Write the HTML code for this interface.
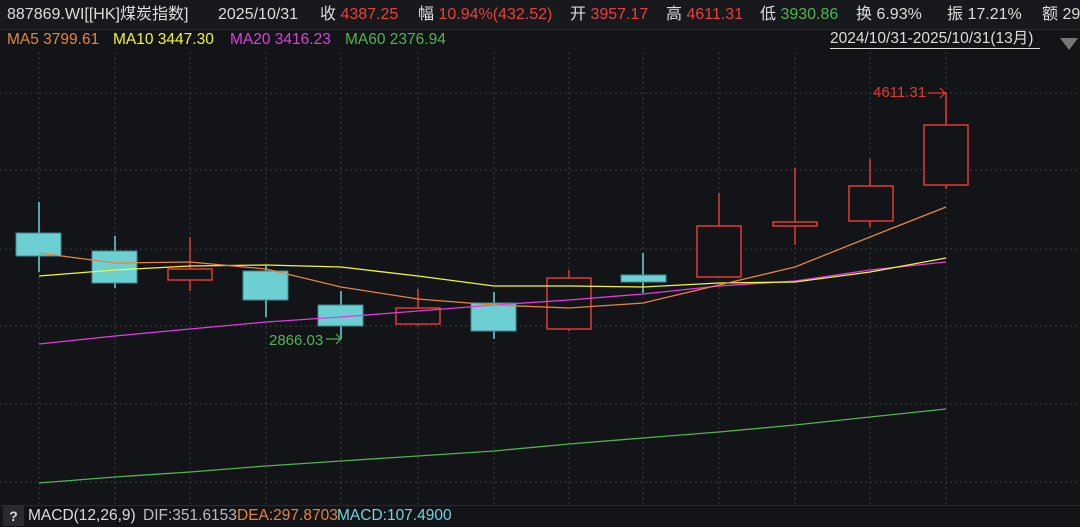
<!DOCTYPE html><html><head><meta charset="utf-8"><style>
body{margin:0;width:1080px;height:526px;background:#131418;overflow:hidden;font-family:"Liberation Sans","Noto Sans CJK SC",sans-serif;position:relative}
.t{position:absolute;white-space:nowrap;font-size:16px;color:#ddd;line-height:20px}
.h{top:5px}.ma{top:30px;font-size:15.5px}
.w{color:#ddd}.r{color:#e8413b}.g{color:#4fb54f}.o{color:#e5853a}.y{color:#f3f33a}.m{color:#e03ce0}.c{color:#6fd6dc}
</style></head><body>
<div style="position:absolute;left:0;top:0;width:1080px;height:29px;background:#18191d;border-bottom:1px solid #2a2b30"></div>
<div class="t h" style="left:7px">887869.WI[[HK]煤炭指数]</div>
<div class="t h" style="left:218px">2025/10/31</div>
<div class="t h" style="left:320px">收 <span class="r">4387.25</span></div>
<div class="t h" style="left:418px">幅 <span class="r">10.94%(432.52)</span></div>
<div class="t h" style="left:570px">开 <span class="r">3957.17</span></div>
<div class="t h" style="left:666px">高 <span class="r">4611.31</span></div>
<div class="t h" style="left:760px">低 <span class="g">3930.86</span></div>
<div class="t h" style="left:856px">换 6.93%</div>
<div class="t h" style="left:947px">振 17.21%</div>
<div class="t h" style="left:1042px">额 298</div>
<div class="t ma o" style="left:7px">MA5 3799.61</div>
<div class="t ma y" style="left:113px">MA10 3447.30</div>
<div class="t ma m" style="left:230px">MA20 3416.23</div>
<div class="t ma g" style="left:345px">MA60 2376.94</div>
<div class="t" style="left:830px;top:30px;font-size:15.5px;border-bottom:1px solid #ddd;line-height:18px;width:210px">2024/10/31-2025/10/31(13月)</div>
<svg style="position:absolute;left:0;top:0" width="1080" height="526">
<polygon points="1060,38 1078,38 1069,50" fill="#777"/>
<g stroke="#3a3b40" stroke-dasharray="2,3" stroke-width="1">
<line x1="0" y1="93" x2="1080" y2="93"/><line x1="0" y1="170" x2="1080" y2="170"/><line x1="0" y1="249" x2="1080" y2="249"/><line x1="0" y1="326" x2="1080" y2="326"/><line x1="0" y1="404" x2="1080" y2="404"/><line x1="0" y1="482" x2="1080" y2="482"/>
<line x1="39" y1="52" x2="39" y2="505"/><line x1="115" y1="52" x2="115" y2="505"/><line x1="190" y1="52" x2="190" y2="505"/><line x1="266" y1="52" x2="266" y2="505"/><line x1="341" y1="52" x2="341" y2="505"/><line x1="418" y1="52" x2="418" y2="505"/><line x1="494" y1="52" x2="494" y2="505"/><line x1="569" y1="52" x2="569" y2="505"/><line x1="643" y1="52" x2="643" y2="505"/><line x1="719" y1="52" x2="719" y2="505"/><line x1="795" y1="52" x2="795" y2="505"/><line x1="870" y1="52" x2="870" y2="505"/><line x1="946" y1="52" x2="946" y2="505"/>
</g>
<g stroke="#6fd6dc" stroke-width="1.5">
<line x1="39" y1="202" x2="39" y2="272"/><line x1="115" y1="236" x2="115" y2="288"/><line x1="266" y1="266" x2="266" y2="317"/><line x1="341" y1="291" x2="341" y2="339"/><line x1="494" y1="292" x2="494" y2="339"/><line x1="643" y1="253" x2="643" y2="293"/>
</g>
<g fill="#6ccfd2" stroke="#3f8a8e">
<rect x="16" y="233" width="45" height="23"/><rect x="92" y="251" width="45" height="32"/><rect x="243" y="271" width="45" height="29"/><rect x="318" y="305" width="45" height="21"/><rect x="471" y="303" width="45" height="28"/><rect x="621" y="275" width="45" height="7"/>
</g>
<g stroke="#e03a33" stroke-width="1.5" fill="none">
<line x1="190" y1="237" x2="190" y2="291"/><line x1="418" y1="289" x2="418" y2="326"/><line x1="569" y1="270" x2="569" y2="331"/><line x1="719" y1="193" x2="719" y2="226"/><line x1="795" y1="168" x2="795" y2="245"/><line x1="870" y1="159" x2="870" y2="227"/><line x1="946" y1="92" x2="946" y2="189"/>
<rect x="168" y="269" width="44" height="11" fill="#131418"/><rect x="396" y="308" width="44" height="16" fill="#131418"/><rect x="547" y="278" width="44" height="51" fill="#131418"/><rect x="697" y="226" width="44" height="51" fill="#131418"/><rect x="773" y="222" width="44" height="4" fill="#131418"/><rect x="849" y="186" width="44" height="35" fill="#131418"/><rect x="924" y="125" width="44" height="60" fill="#131418"/>
</g>
<g fill="none" stroke-width="1.3">
<polyline stroke="#4fb54f" points="39,483 115,477 190,472 266,466 341,461 418,456 494,451 569,444 643,438 719,432 795,425 870,417 946,409"/>
<polyline stroke="#e03ce0" points="39,344 115,336 190,329 266,322 341,317 418,311 494,305 569,300 643,294 719,286 795,281 870,270 946,262"/>
<polyline stroke="#f3f33a" points="39,276 115,270 190,266 266,265 341,267 418,276 494,286 569,286 643,287 719,283 795,282 870,272 946,258"/>
<polyline stroke="#e5853a" points="39,253 115,263 190,262 266,269 341,287 418,299 494,305 569,308 643,303 719,285 795,267 870,237 946,207"/>
</g>
<g fill="none" stroke-width="1.2">
<path stroke="#4fb54f" d="M326 339H341M336 334L341 339L336 344"/>
<path stroke="#e03a33" d="M928 93H945M940 88L945 93L940 98"/>
</g>
<text x="269" y="345" fill="#4fb54f" font-size="15" font-family="Liberation Sans">2866.03</text>
<text x="873" y="97" fill="#e03a33" font-size="15" font-family="Liberation Sans">4611.31</text>
</svg>
<div style="position:absolute;left:0;top:505px;width:1080px;height:21px;background:#131418;border-top:1px solid #2a2b30"></div>
<div style="position:absolute;left:3px;top:506px;width:21px;height:20px;background:#2a2b30;color:#ddd;font-size:14px;text-align:center;line-height:20px;font-weight:bold;font-family:'Liberation Sans',sans-serif">?</div>
<div class="t" style="left:28px;top:506px;font-size:15.5px">MACD(12,26,9)</div>
<div class="t" style="left:143px;top:506px;font-size:15.5px;color:#bbb">DIF:351.6153</div>
<div class="t o" style="left:237px;top:506px;font-size:15.5px">DEA:297.8703</div>
<div class="t c" style="left:337px;top:506px;font-size:15.5px">MACD:107.4900</div>
</body></html>
